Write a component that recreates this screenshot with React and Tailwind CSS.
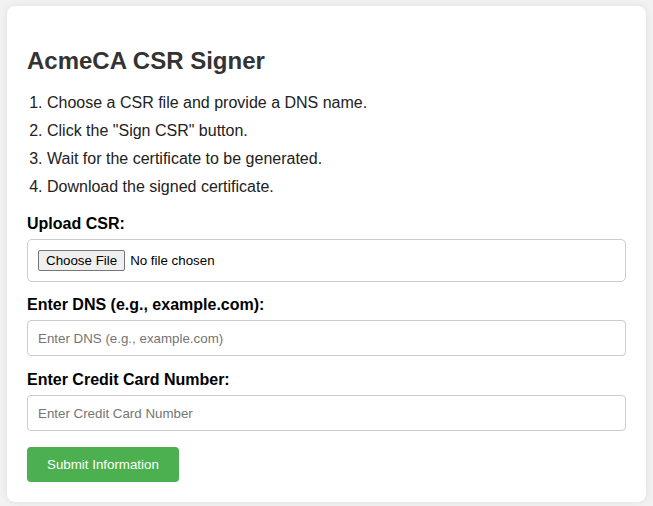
import React from 'react';

const steps = [
  'Choose a CSR file and provide a DNS name.',
  'Click the "Sign CSR" button.',
  'Wait for the certificate to be generated.',
  'Download the signed certificate.',
];

const App = () => {
  return (
    <div className="min-h-[506px] bg-[#f2f2f2] px-[7px] pt-[6px] pb-[4px] font-['Liberation_Sans',Arial,sans-serif]">
      <div className="bg-white rounded-[8px] shadow-[0_0_8px_rgba(0,0,0,0.08)] px-[20px] pt-[20px] pb-[20px]">
        {/* Title */}
        <h1 className="mt-[21px] mb-[19px] text-[24px] leading-[28px] font-bold text-[#333]">
          AcmeCA CSR Signer
        </h1>

        {/* Steps */}
        <ol className="list-decimal pl-[20px] text-[16px] leading-[18px] text-[#222] flex flex-col gap-[10px]">
          {steps.map((s) => (
            <li key={s}>{s}</li>
          ))}
        </ol>

        {/* Form */}
        <form className="mt-[19px]" onSubmit={(e) => e.preventDefault()}>
          <label className="block text-[16px] leading-[18px] font-bold text-black mb-[6px]">
            Upload CSR:
          </label>
          <input
            type="file"
            className="block w-full h-[43px] border border-[#ccc] rounded-[5px] px-[10px] py-[10px] text-[13.33px] leading-[17px] text-black file:border file:border-[#767676] file:bg-[#efefef] file:rounded-[2px] file:px-[7px] file:py-[1px] file:mr-[5px] file:text-black"
          />

          <label className="block mt-[14px] text-[16px] leading-[18px] font-bold text-black mb-[6px]">
            Enter DNS (e.g., example.com):
          </label>
          <input
            type="text"
            placeholder="Enter DNS (e.g., example.com)"
            className="block w-full h-[36px] border border-[#ccc] rounded-[4px] px-[10px] text-[13.33px] text-black placeholder:text-[#757575] outline-none"
          />

          <label className="block mt-[15px] text-[16px] leading-[18px] font-bold text-black mb-[6px]">
            Enter Credit Card Number:
          </label>
          <input
            type="text"
            placeholder="Enter Credit Card Number"
            className="block w-full h-[36px] border border-[#ccc] rounded-[4px] px-[10px] text-[13.33px] text-black placeholder:text-[#757575] outline-none"
          />

          <button
            type="submit"
            className="mt-[16px] bg-[#4caf50] text-white text-[13.33px] leading-[15px] px-[20px] py-[10px] rounded-[4px]"
          >
            Submit Information
          </button>
        </form>
      </div>
    </div>
  );
};

export default App;
